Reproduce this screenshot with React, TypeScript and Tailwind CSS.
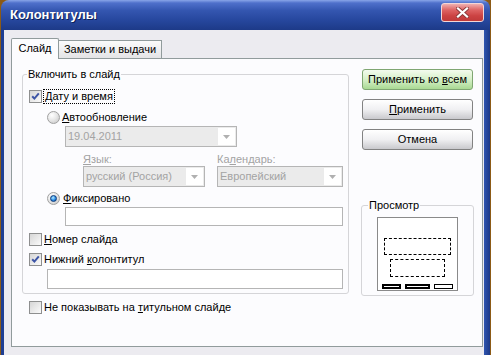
import React from "react";

function Check({ checked }: { checked?: boolean }) {
  return (
    <span className="relative inline-block w-[13px] h-[13px] shrink-0 border border-[#8e8f8f] bg-gradient-to-br from-[#d6d6d6] to-[#fbfbfb]">
      {checked && (
        <svg className="absolute left-0 top-0" width="11" height="11" viewBox="0 0 11 11">
          <path d="M2.2 5.2 L4.4 7.6 L8.8 2.4" fill="none" stroke="#3d55a6" strokeWidth="2" />
        </svg>
      )}
    </span>
  );
}

function Radio({ checked }: { checked?: boolean }) {
  return (
    <span className="relative flex items-center justify-center w-[13px] h-[13px] shrink-0 rounded-full border border-[#a0a0a0] bg-[radial-gradient(circle_at_35%_30%,#ffffff_0%,#e8e8e8_45%,#c2c2c2_100%)]">
      {checked && (
        <span className="block w-[7px] h-[7px] rounded-full border border-[#0c3a7a] bg-[radial-gradient(circle_at_40%_35%,#b6ecff_0%,#2a8ce6_55%,#0b4596_100%)]" />
      )}
    </span>
  );
}

function Combo({ value, w }: { value: string; w: string }) {
  return (
    <div className={`flex h-[21px] ${w} border border-[#b5b5b5] bg-[#ebebeb] items-stretch`}>
      <span className="flex-1 flex items-center pl-[2px] text-[#a3a3a3] text-[11px]">{value}</span>
      <span className="w-[17px] my-[1px] mr-[1px] bg-white flex items-center justify-center">
        <svg width="7" height="4" viewBox="0 0 7 4">
          <path d="M0 0 H7 L3.5 4 Z" fill="#b0b0b0" />
        </svg>
      </span>
    </div>
  );
}

function Btn({ children, green }: { children: React.ReactNode; green?: boolean }) {
  return (
    <div
      className={`w-[111px] h-[21px] rounded-[3px] border flex items-center justify-center text-[11px] text-black ${
        green
          ? "border-[#7fa672] bg-gradient-to-b from-[#f3fbee] via-[#d6f0c8] to-[#a9d993]"
          : "border-[#828282] bg-gradient-to-b from-[#ffffff] via-[#f0f0f2] to-[#c9c9cd]"
      }`}
    >
      <span>{children}</span>
    </div>
  );
}

export default function App() {
  return (
    <div className="w-[491px] h-[355px] overflow-hidden bg-[#8c5a16] px-[1px] font-['Liberation_Sans',Arial,sans-serif] text-[11px] leading-[13px] text-black">
      <div className="h-full flex flex-col rounded-t-[8px] overflow-hidden">
        {/* Title bar */}
        <div className="h-[30px] shrink-0 flex items-start justify-between pl-[9px] pr-[6px] bg-[linear-gradient(to_bottom,#89a5e8_0%,#4f70cb_10%,#3456b0_35%,#27489f_65%,#1d3a88_100%)]">
          <span className="mt-[7px] text-[13px] leading-[16px] font-bold text-white [text-shadow:1px_1px_0_#0d2258]">
            Колонтитулы
          </span>
          <div className="mt-[3px] w-[43px] h-[19px] rounded-[3px] border border-[#f3d6d6] bg-[linear-gradient(to_bottom,#f0b0b0_0%,#de6464_35%,#cc4242_70%,#c03a3a_100%)] flex items-center justify-center">
            <svg width="13" height="11" viewBox="0 0 13 11">
              <path d="M2 1.5 L11 9.5 M11 1.5 L2 9.5" stroke="#8d3b3b" strokeWidth="4" strokeLinecap="square" />
              <path d="M2 1.5 L11 9.5 M11 1.5 L2 9.5" stroke="#ffffff" strokeWidth="2.2" strokeLinecap="square" />
            </svg>
          </div>
        </div>

        {/* Frame */}
        <div className="flex-1 flex">
          <div className="w-[3px] bg-[#1f3e92]" />
          <div className="flex-1 bg-[#ecebf0] pl-[7px] pt-[7px]">
            {/* Tabs */}
            <div className="flex items-end h-[21px]">
              <div className="relative z-10 -mb-[1px] w-[48px] h-[21px] border border-b-0 border-[#919b9c] bg-[#fcfcfe] rounded-t-[2px] flex items-center justify-center pb-[1px]">
                Слайд
              </div>
              <div className="w-[103px] h-[18px] border border-l-0 border-b-0 border-[#919b9c] bg-gradient-to-b from-[#fbfbfb] to-[#e4e4e6] flex items-center justify-center">
                Заметки и выдачи
              </div>
            </div>

            {/* Panel */}
            <div className="w-[472px] h-[289px] border border-[#919b9c] bg-[#fcfcfe] flex pl-[10px] pt-[10px]">
              {/* Left column */}
              <div className="w-[327px] pt-[5px]">
                <div className="relative h-[220px] border border-[#d5d5d8] rounded-[3px] pl-[6px] pt-[14px]">
                  <span className="absolute -top-[7px] left-[4px] bg-[#fcfcfe] px-[1px] leading-[13px]">
                    Включить в слайд
                  </span>
                  <div className="flex items-center h-[15px]">
                    <Check checked />
                    <span className="ml-[1px] px-[1px] h-[15px] flex items-center border border-dotted border-black">
                      <span>
                        <span className="underline">Д</span>ату и время
                      </span>
                    </span>
                  </div>
                  <div className="flex items-center h-[15px] mt-[6px] ml-[18px]">
                    <Radio />
                    <span className="ml-[2px]">
                      <span className="underline">А</span>втообновление
                    </span>
                  </div>
                  <div className="mt-[1px] ml-[36px]">
                    <Combo value="19.04.2011" w="w-[172px]" />
                  </div>
                  <div className="flex h-[13px] mt-[6px] ml-[54px] text-[#a3a3a3]">
                    <span className="w-[134px]">
                      <span className="underline">Я</span>зык:
                    </span>
                    <span>
                      Ка<span className="underline">л</span>ендарь:
                    </span>
                  </div>
                  <div className="flex gap-[12px] ml-[54px]">
                    <Combo value="русский (Россия)" w="w-[122px]" />
                    <Combo value="Европейский" w="w-[126px]" />
                  </div>
                  <div className="flex items-center h-[15px] mt-[4px] ml-[18px]">
                    <Radio checked />
                    <span className="ml-[3px]">
                      <span className="underline">Ф</span>иксировано
                    </span>
                  </div>
                  <div className="mt-[1px] ml-[36px] w-[278px] h-[19px] border border-[#b5b5b5] bg-white" />
                  <div className="flex items-center h-[15px] mt-[6px]">
                    <Check />
                    <span className="ml-[2px]">
                      <span className="underline">Н</span>омер слайда
                    </span>
                  </div>
                  <div className="flex items-center h-[15px] mt-[5px]">
                    <Check checked />
                    <span className="ml-[2px]">
                      Нижний <span className="underline">к</span>олонтитул
                    </span>
                  </div>
                  <div className="mt-[2px] ml-[18px] w-[296px] h-[20px] border border-[#b5b5b5] bg-white" />
                </div>
                <div className="flex items-center h-[15px] mt-[6px] ml-[7px]">
                  <Check />
                  <span className="ml-[2px]">
                    Не показывать на <span className="underline">т</span>итульном слайде
                  </span>
                </div>
              </div>

              {/* Right column */}
              <div className="ml-[13px] flex flex-col">
                <div className="flex flex-col gap-[9px]">
                  <Btn green>
                    Применить ко <span className="underline">в</span>сем
                  </Btn>
                  <Btn>
                    <span className="underline">П</span>рименить
                  </Btn>
                  <Btn>Отмена</Btn>
                </div>
                <div className="relative -ml-[1px] mt-[55px] w-[113px] h-[91px] border border-[#d5d5d8] rounded-[3px] flex justify-center pt-[11px]">
                  <span className="absolute -top-[7px] left-[6px] bg-[#fcfcfe] px-[1px] leading-[13px]">
                    Просмотр
                  </span>
                  <div className="w-[81px] h-[74px] border border-[#8a8a8a] bg-white flex flex-col items-center pt-[20px]">
                    <div className="w-[67px] h-[17px] border border-dashed border-black" />
                    <div className="mt-[4px] w-[55px] h-[18px] border border-dashed border-black" />
                    <div className="mt-[7px] flex gap-[4px]">
                      <div className="w-[19px] h-[5px] border-2 border-black bg-white" />
                      <div className="w-[25px] h-[5px] border-2 border-black bg-white" />
                      <div className="w-[19px] h-[5px] border border-black bg-white" />
                    </div>
                  </div>
                </div>
              </div>
            </div>
          </div>
          <div className="w-[6px] bg-[linear-gradient(to_right,#2f55b0,#1c3886)]" />
        </div>
      </div>
    </div>
  );
}
